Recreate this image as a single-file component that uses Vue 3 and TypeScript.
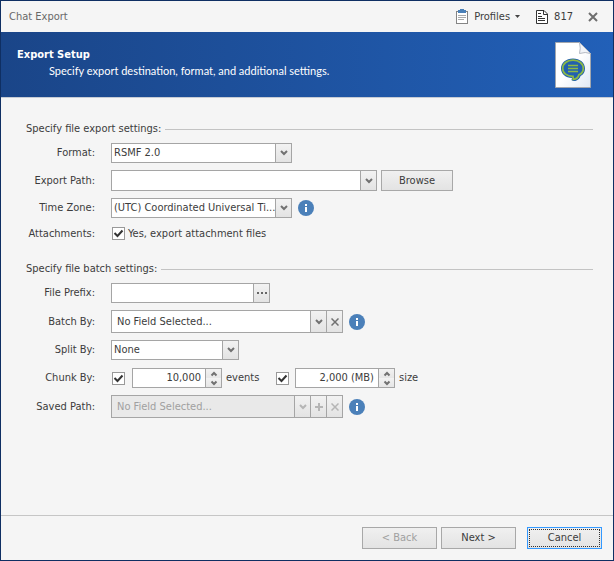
<script setup lang="ts">
import { ref } from 'vue'

const format = ref('RSMF 2.0')
const exportPath = ref('')
const timeZone = ref('(UTC) Coordinated Universal Ti...')
const exportAttachments = ref(true)
const filePrefix = ref('')
const batchBy = ref('No Field Selected...')
const splitBy = ref('None')
const chunkEvents = ref(true)
const chunkSize = ref(true)
const eventLimit = ref('10,000')
const sizeLimit = ref('2,000 (MB)')
const savedPath = ref('No Field Selected...')
</script>

<template>
  <div class="window">
    <header class="titlebar">
      <h1 class="title">Chat Export</h1>
      <button class="tool profiles" type="button">
        <svg class="clip" width="13" height="15" viewBox="0 0 13 15" aria-hidden="true">
          <rect x="0.5" y="2.5" width="11" height="12" fill="#fff" stroke="#858585" />
          <path d="M2 1h2V0h4v1h2v3H2z" fill="#4a80b8" />
          <path d="M2 6.5h8M2 8.5h8M2 10.5h6" stroke="#aaa" />
        </svg>
        <span>Profiles</span>
        <svg class="caret" width="5" height="3" viewBox="0 0 5 3" aria-hidden="true"><path d="M0 0h5L2.5 3z" fill="#444" /></svg>
      </button>
      <button class="tool count" type="button">
        <svg width="12" height="14" viewBox="0 0 12 14" aria-hidden="true">
          <path d="M0.5 0.5h7.500l3.500 3.500v9.500h-11z" fill="#fff" stroke="#333" />
          <path d="M7.500 0.500v4h4" fill="none" stroke="#333" />
          <path d="M2 3.500h3M2 6.500h4M2 8.500h7M2 10.500h7" stroke="#333" />
        </svg>
        <span>817</span>
      </button>
      <button class="tool close" type="button" aria-label="Close">
        <svg width="10" height="10" viewBox="0 0 10 10" aria-hidden="true"><path d="M1 1l8 8M9 1L1 9" stroke="#6e6e6e" stroke-width="2" /></svg>
      </button>
    </header>

    <section class="banner">
      <div>
        <h2>Export Setup</h2>
        <p>Specify export destination, format, and additional settings.</p>
      </div>
      <svg width="36" height="46" viewBox="0 0 36 46" aria-hidden="true">
        <defs>
          <linearGradient id="sheet" x1="0" y1="0" x2="1" y2="1">
            <stop offset="0.5" stop-color="#fff" />
            <stop offset="1" stop-color="#dfe8f4" />
          </linearGradient>
        </defs>
        <path d="M0.500 0.500h24l11 11v34h-35z" fill="url(#sheet)" stroke="#a3a7ae" />
        <path d="M24.500 0.500q1.500 6 0 11q6-2 11 0z" fill="#f1f4f9" stroke="#b3b8c2" />
        <path d="M18 16.500c-7 0-12 4.200-12 10 0 5.500 4.800 9.500 11 9.500l-.5 2c1 1 3 1.500 5 .5 2-1 3.500-2.500 4-4.500 3-1.500 4.500-4 4.500-7.500 0-5.800-5-10-12-10z" fill="#2562ad" />
        <path d="M18 18.200c-6 0-10.300 3.500-10.300 8.200 0 4.800 4.200 8 10.300 7.900l.3 3.200c3-.4 5-2.200 5.600-4.700 2.900-1.300 4.400-3.600 4.400-6.400 0-4.700-4.300-8.200-10.300-8.200z" fill="#2360ae" stroke="#8dba45" stroke-width="1.700" />
        <path d="M13 23.500h10M13 26.500h10M13 29.500h10" stroke="#8dba45" stroke-width="1.500" />
      </svg>
    </section>

    <main class="content">
      <fieldset class="group">
        <legend class="heading"><span>Specify file export settings:</span></legend>

        <div class="row">
          <label class="name" for="format">Format:</label>
          <div class="box medium">
            <select id="format" v-model="format"><option>RSMF 2.0</option></select>
            <span class="cap"><svg class="icon" viewBox="0 0 8 8" aria-hidden="true"><path d="M1 2l3 3 3-3" /></svg></span>
          </div>
        </div>

        <div class="row">
          <label class="name" for="path">Export Path:</label>
          <div class="box wide tall">
            <input id="path" v-model="exportPath" type="text" />
            <button class="cap" type="button" aria-label="Recent paths"><svg class="icon" viewBox="0 0 8 8" aria-hidden="true"><path d="M1 2l3 3 3-3" /></svg></button>
          </div>
          <button class="btn browse" type="button">Browse</button>
        </div>

        <div class="row">
          <label class="name" for="zone">Time Zone:</label>
          <div class="box medium">
            <select id="zone" v-model="timeZone"><option>(UTC) Coordinated Universal Ti...</option></select>
            <span class="cap"><svg class="icon" viewBox="0 0 8 8" aria-hidden="true"><path d="M1 2l3 3 3-3" /></svg></span>
          </div>
          <button class="info" type="button" aria-label="About time zones">
            <svg viewBox="0 0 16 16" aria-hidden="true"><circle cx="8" cy="8" r="8" /><path d="M7 4h2v2H7zM7 7h2v5H7z" /></svg>
          </button>
        </div>

        <div class="row checks">
          <span class="name">Attachments:</span>
          <label class="check">
            <input v-model="exportAttachments" type="checkbox" />
            <svg viewBox="0 0 13 13" aria-hidden="true"><path d="M2.500 6l3 3 5-5.500" /></svg>
            <span>Yes, export attachment files</span>
          </label>
        </div>
      </fieldset>

      <fieldset class="group">
        <legend class="heading"><span>Specify file batch settings:</span></legend>

        <div class="row">
          <label class="name" for="prefix">File Prefix:</label>
          <div class="box prefix">
            <input id="prefix" v-model="filePrefix" type="text" />
            <button class="cap" type="button" aria-label="Edit prefix">
              <svg width="10" height="2" viewBox="0 0 10 2" aria-hidden="true"><path d="M0 0h2v2H0zM4 0h2v2H4zM8 0h2v2H8z" fill="#666" /></svg>
            </button>
          </div>
        </div>

        <div class="row">
          <label class="name" for="batch">Batch By:</label>
          <div class="box field">
            <input id="batch" v-model="batchBy" type="text" readonly />
            <button class="cap" type="button" aria-label="Choose batch field"><svg class="icon" viewBox="0 0 8 8" aria-hidden="true"><path d="M1 2l3 3 3-3" /></svg></button>
            <button class="cap" type="button" aria-label="Clear batch field"><svg class="icon thin" viewBox="0 0 8 8" aria-hidden="true"><path d="M0.500 0.500l7 7M7.500 0.500l-7 7" /></svg></button>
          </div>
          <button class="info" type="button" aria-label="About batch fields">
            <svg viewBox="0 0 16 16" aria-hidden="true"><circle cx="8" cy="8" r="8" /><path d="M7 4h2v2H7zM7 7h2v5H7z" /></svg>
          </button>
        </div>

        <div class="row">
          <label class="name" for="split">Split By:</label>
          <div class="box short">
            <select id="split" v-model="splitBy"><option>None</option></select>
            <span class="cap"><svg class="icon" viewBox="0 0 8 8" aria-hidden="true"><path d="M1 2l3 3 3-3" /></svg></span>
          </div>
        </div>

        <div class="row chunk">
          <span class="name">Chunk By:</span>
          <label class="check">
            <input v-model="chunkEvents" type="checkbox" aria-label="Chunk by events" />
            <svg viewBox="0 0 13 13" aria-hidden="true"><path d="M2.500 6l3 3 5-5.500" /></svg>
          </label>
          <div class="box spin-events">
            <input id="events" v-model="eventLimit" class="number" type="text" />
            <span class="spin">
              <button type="button" aria-label="More events"><svg class="icon" viewBox="0 0 8 8" aria-hidden="true"><path d="M1.500 5.500L4 3l2.500 2.500" /></svg></button>
              <button type="button" aria-label="Fewer events"><svg class="icon" viewBox="0 0 8 8" aria-hidden="true"><path d="M1.500 2.500L4 5l2.500-2.500" /></svg></button>
            </span>
          </div>
          <label class="unit events" for="events">events</label>
          <label class="check second">
            <input v-model="chunkSize" type="checkbox" aria-label="Chunk by size" />
            <svg viewBox="0 0 13 13" aria-hidden="true"><path d="M2.500 6l3 3 5-5.500" /></svg>
          </label>
          <div class="box spin-size">
            <input id="size" v-model="sizeLimit" class="number" type="text" />
            <span class="spin">
              <button type="button" aria-label="Larger size"><svg class="icon" viewBox="0 0 8 8" aria-hidden="true"><path d="M1.500 5.500L4 3l2.500 2.500" /></svg></button>
              <button type="button" aria-label="Smaller size"><svg class="icon" viewBox="0 0 8 8" aria-hidden="true"><path d="M1.500 2.500L4 5l2.500-2.500" /></svg></button>
            </span>
          </div>
          <label class="unit" for="size">size</label>
        </div>

        <div class="row">
          <label class="name" for="saved">Saved Path:</label>
          <div class="box field disabled">
            <input id="saved" v-model="savedPath" type="text" disabled />
            <button class="cap" type="button" disabled aria-label="Choose saved path"><svg class="icon" viewBox="0 0 8 8" aria-hidden="true"><path d="M1 2l3 3 3-3" /></svg></button>
            <button class="cap" type="button" disabled aria-label="Add saved path"><svg class="icon" viewBox="0 0 8 8" aria-hidden="true"><path d="M4 0v8M0 4h8" /></svg></button>
            <button class="cap" type="button" disabled aria-label="Clear saved path"><svg class="icon thin" viewBox="0 0 8 8" aria-hidden="true"><path d="M0.500 0.500l7 7M7.500 0.500l-7 7" /></svg></button>
          </div>
          <button class="info" type="button" aria-label="About saved path">
            <svg viewBox="0 0 16 16" aria-hidden="true"><circle cx="8" cy="8" r="8" /><path d="M7 4h2v2H7zM7 7h2v5H7z" /></svg>
          </button>
        </div>
      </fieldset>
    </main>

    <footer class="footer">
      <button class="btn" type="button" disabled>&lt; Back</button>
      <button class="btn" type="button">Next &gt;</button>
      <button class="btn cancel" type="button"><span>Cancel</span></button>
    </footer>
  </div>
</template>

<style>
body {
  margin: 0;
}
</style>

<style scoped>
.window,
.window * {
  box-sizing: border-box;
}

.window {
  display: flex;
  flex-direction: column;
  min-height: 100vh;
  border: 1px solid #0f2f63;
  background: #f5f5f5;
  color: #3c3c3c;
  font: 11px/16px "DejaVu Sans Condensed", "DejaVu Sans", sans-serif;
}

button,
input,
select {
  margin: 0;
  padding: 0;
  border: 0;
  border-radius: 0;
  background: none;
  color: inherit;
  font: inherit;
}

button {
  display: flex;
  align-items: center;
  justify-content: center;
}

svg {
  display: block;
  flex: none;
}

.titlebar {
  display: flex;
  align-items: center;
  height: 31px;
  padding: 0 15px 0 8px;
}

.title {
  flex: 1;
  margin: 0;
  color: #686868;
  font-size: inherit;
  font-weight: 400;
}

.tool {
  gap: 5px;
}

.count {
  margin-left: 16px;
  gap: 6px;
}

.close {
  margin-left: 15px;
}

.banner {
  display: flex;
  justify-content: space-between;
  height: 66px;
  padding: 10px 22px 0 16px;
  border-bottom: 1px solid #c6cbd4;
  background: linear-gradient(90deg, #1a4588, #2260b8);
  color: #fff;
}

.banner h2 {
  margin: 5px 0 0;
  font-size: 11px;
  font-weight: 700;
}

.banner p {
  margin: 0 0 0 32px;
  font-family: Lato, "Liberation Sans", sans-serif;
}

.content {
  flex: 1;
  padding: 23px 20px 0 25px;
}

.group {
  display: flex;
  flex-direction: column;
  gap: 7px;
  min-width: 0;
  margin: 0 0 19px;
  padding: 0;
  border: 0;
}

.heading {
  display: flex;
  align-items: center;
  gap: 4px;
  width: 100%;
  margin-bottom: 6px;
  padding: 0;
}

.heading::after {
  content: "";
  flex: 1;
  height: 1px;
  background: #c3c3c3;
}

.row {
  display: flex;
  align-items: center;
}

.name {
  width: 69px;
  margin-right: 16px;
  text-align: right;
  white-space: nowrap;
}

.box {
  display: flex;
  height: 20px;
  border: 1px solid #a5a5a5;
  background: #fff;
}

.box input,
.box select {
  flex: 1;
  min-width: 0;
  padding: 0 0 0 2px;
  outline: 0;
  appearance: none;
}

.box .number {
  padding-right: 4px;
  text-align: right;
}

.medium {
  width: 181px;
}

.wide {
  width: 266px;
}

.tall {
  height: 21px;
}

.prefix {
  width: 159px;
}

.short {
  width: 128px;
}

.field {
  width: 232px;
  height: 23px;
}

.field input {
  padding-left: 5px;
}

.spin-events {
  width: 90px;
  margin-left: 7px;
}

.spin-size {
  width: 100px;
  margin-left: 6px;
}

.cap {
  display: flex;
  align-items: center;
  justify-content: center;
  width: 16px;
  border-left: 1px solid #a5a5a5;
  background: linear-gradient(#f2f2f2, #e3e3e3);
  pointer-events: none;
}

button.cap {
  pointer-events: auto;
}

.icon {
  width: 8px;
  height: 8px;
  fill: none;
  stroke: #717171;
  stroke-width: 2;
}

.thin {
  stroke-width: 1.5;
}

.disabled {
  background: #e9e9e9;
  color: #a0a0a0;
}

.disabled .icon {
  stroke: #b5b5b5;
}

.spin {
  display: flex;
  flex-direction: column;
  width: 16px;
  border-left: 1px solid #a5a5a5;
}

.spin button {
  flex: 1;
  background: linear-gradient(#f2f2f2, #e6e6e6);
}

.info {
  width: 16px;
  margin-left: 6px;
}

.info svg {
  width: 16px;
  height: 16px;
  fill: #4b80b9;
}

.info path {
  fill: #fff;
}

.checks {
  height: 17px;
}

.check {
  display: grid;
  grid-template-columns: 13px auto;
  align-items: center;
  column-gap: 3px;
  margin-left: 1px;
}

.chunk .check {
  grid-template-columns: 13px;
}

.chunk .second {
  margin-left: 14px;
}

.check input {
  grid-area: 1 / 1;
  width: 13px;
  height: 13px;
  border: 1px solid #999;
  background: #fff;
  appearance: none;
}

.check svg {
  grid-area: 1 / 1;
  width: 13px;
  height: 13px;
  fill: none;
  stroke: #333;
  stroke-width: 2;
  visibility: hidden;
  pointer-events: none;
}

.check input:checked + svg {
  visibility: visible;
}

.chunk {
  padding-top: 1px;
}

.unit {
  margin-left: 4px;
}

.events {
  width: 36px;
}

.btn {
  width: 75px;
  height: 22px;
  border: 1px solid #a8a8a8;
  background: linear-gradient(#f0f0f0, #e3e3e3);
}

.browse {
  width: 72px;
  height: 21px;
  margin-left: 4px;
}

.btn:disabled {
  color: #a0a0a0;
}

.footer {
  display: flex;
  justify-content: flex-end;
  gap: 4px;
  padding: 11px 11px;
  border-top: 1px solid #c6c6c6;
}

.cancel {
  margin-left: 7px;
  padding: 1px;
  border-color: #3399ff;
}

.cancel span {
  flex: 1;
  border: 1px dotted #333;
}
</style>
